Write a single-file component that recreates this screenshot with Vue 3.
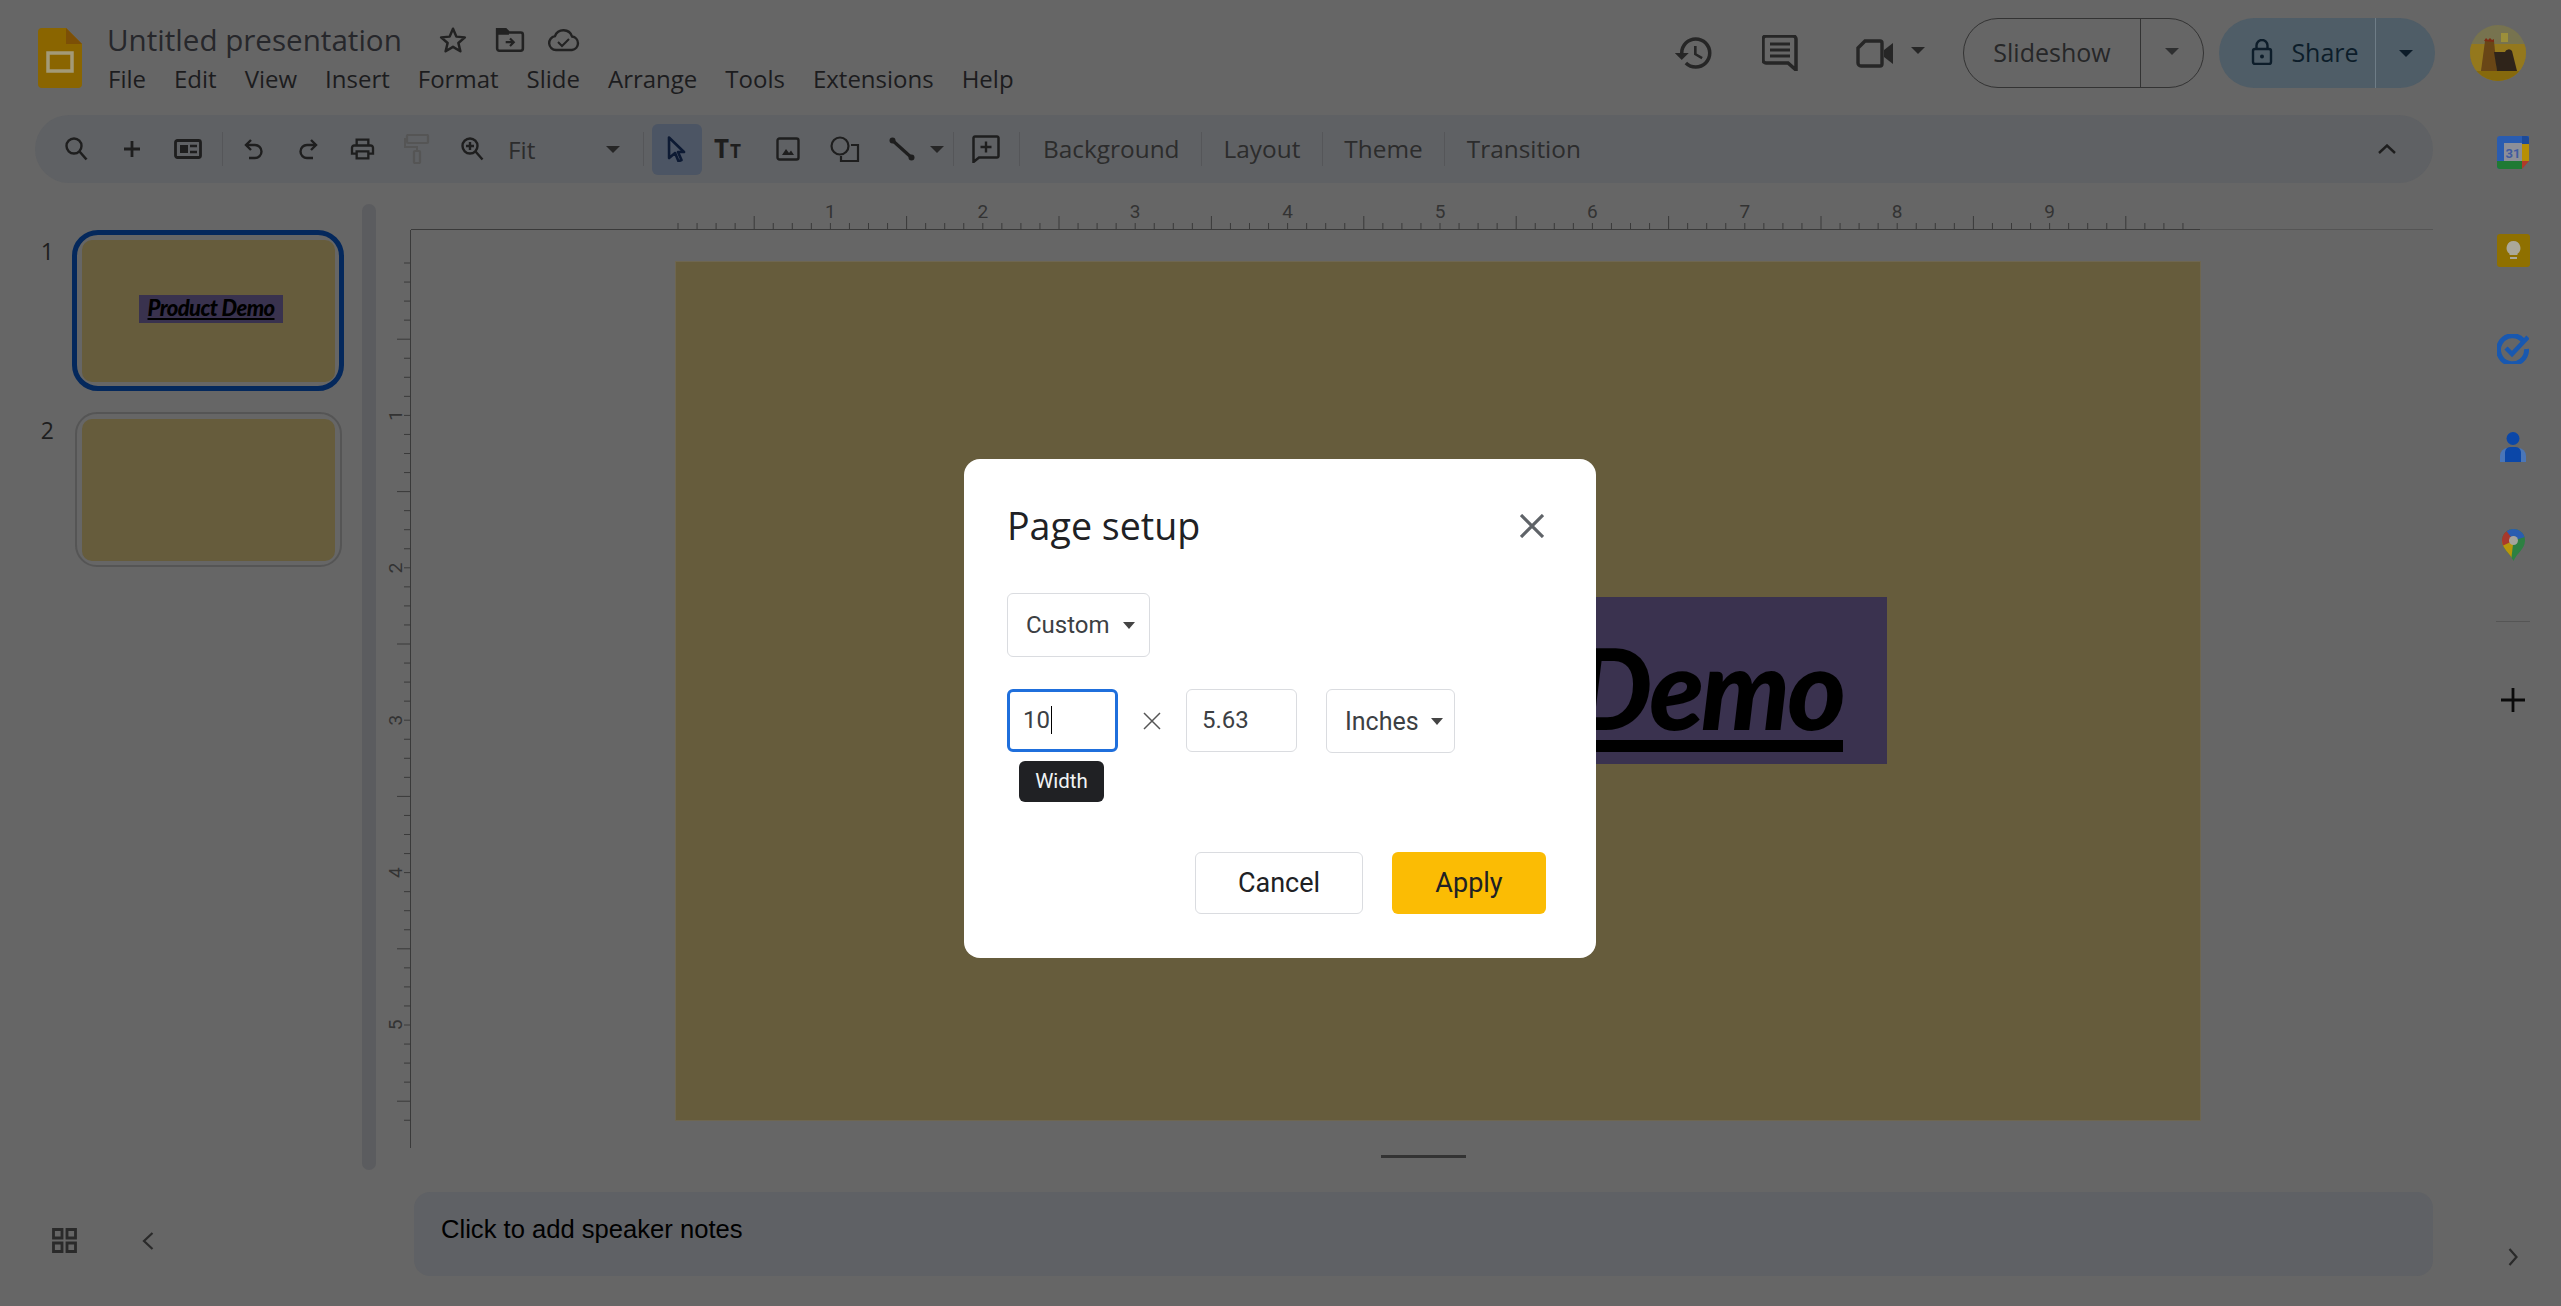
<script setup>
import { computed } from 'vue'

const menus = ['File', 'Edit', 'View', 'Insert', 'Format', 'Slide', 'Arrange', 'Tools', 'Extensions', 'Help']
const textTools = ['Background', 'Layout', 'Theme', 'Transition']

// ruler scale, px per inch at this zoom
const inch = 152.4

const hTicks = computed(() => {
    const out = []
    for (let i = 0; i < 80; i++) {
        out.push({ x: 293 + i * inch / 8, tall: i % 8 === 4 })
    }
    return out
})
const vTicks = computed(() => {
    const out = []
    for (let i = 0; i < 46; i++) {
        out.push({ y: 33 + i * inch / 8, tall: i % 8 === 4 })
    }
    return out
})
const hLabels = [1, 2, 3, 4, 5, 6, 7, 8, 9].map(n => ({ n, x: 293 + n * inch }))
const vLabels = [1, 2, 3, 4, 5].map(n => ({ n, y: 33 + n * inch }))
</script>

<template>
    <div class="page">
        <header class="top">
            <svg class="logo" viewBox="0 0 44 60">
                <path d="M4 0H28L44 16V56a4 4 0 0 1-4 4H4a4 4 0 0 1-4-4V4a4 4 0 0 1 4-4z" fill="#8a6500" />
                <path d="M28 0L44 16H28z" fill="#7c4f06" />
                <rect x="10" y="25" width="24" height="18" fill="none" stroke="#a39a78" stroke-width="3.5" />
            </svg>
            <div class="doc">
                <div class="doc-title">
                    <span class="name">Untitled presentation</span>
                    <svg class="star" viewBox="0 0 24 24"><path d="M12 3l2.7 6.3 6.8.6-5.2 4.5 1.6 6.6-5.9-3.5-5.9 3.5 1.6-6.6-5.2-4.5 6.8-.6z" fill="none" stroke="#222" stroke-width="2" stroke-linejoin="round" /></svg>
                    <svg class="folder" viewBox="0 0 28 24"><path d="M2 2h8l3 3h11a2 2 0 0 1 2 2v13a2 2 0 0 1-2 2H4a2 2 0 0 1-2-2z" fill="none" stroke="#222" stroke-width="2.4" /><path d="M2 2h8l3 3v2H2z" fill="#222" /><path d="M10 14h7M14 10.500l3.500 3.500-3.500 3.500" fill="none" stroke="#222" stroke-width="2" /></svg>
                    <svg class="cloud" viewBox="0 0 33 24"><path d="M9 22a7 7 0 0 1-1-13.900A9 9 0 0 1 25 8.500 6.800 6.800 0 0 1 25 22z" fill="none" stroke="#222" stroke-width="2.400" /><path d="M11 14l4 4 7-7" fill="none" stroke="#222" stroke-width="2" /></svg>
                </div>
                <nav class="menu">
                    <span v-for="m in menus" :key="m">{{ m }}</span>
                </nav>
            </div>
            <div class="actions">
                <svg class="act-history" viewBox="0 0 24 24"><path d="M13 3a9 9 0 0 0-9 9H1l3.890 3.890.07.140L9 12H6c0-3.870 3.130-7 7-7s7 3.130 7 7-3.130 7-7 7c-1.930 0-3.680-.790-4.940-2.060l-1.420 1.420A8.954 8.954 0 0 0 13 21a9 9 0 0 0 0-18zm-1 5v5l4.280 2.540.720-1.210-3.500-2.080V8H12z" fill="#262626" /></svg>
                <svg class="act-comment" viewBox="0 0 36 36"><path d="M4 1h27a3 3 0 0 1 3 3v31l-8-7H4a3 3 0 0 1-3-3V4a3 3 0 0 1 3-3z" fill="none" stroke="#262626" stroke-width="3.500" /><path d="M8 9h20M8 15h20M8 21h20" stroke="#262626" stroke-width="3" /></svg>
                <svg class="act-camera" viewBox="0 0 37 29"><path d="M9 2h15a2 2 0 0 1 2 2v21a2 2 0 0 1-2 2H5a3 3 0 0 1-3-3V9z" fill="none" stroke="#262626" stroke-width="3.400" /><path d="M28 11l9-7v21l-9-7z" fill="#262626" /></svg>
                <i class="caret cam-caret"></i>
                <div class="pill slideshow">
                    <span class="pill-main">Slideshow</span>
                    <span class="pill-more"><i class="caret"></i></span>
                </div>
                <div class="pill share">
                    <span class="pill-main">
                        <svg class="lock" viewBox="0 0 22 26"><path d="M5.500 10V6.500a5.500 5.500 0 0 1 11 0V10" fill="none" stroke="#0d1d2a" stroke-width="2.400" /><rect x="2" y="10" width="18" height="15" rx="2" fill="none" stroke="#0d1d2a" stroke-width="2.400" /><circle cx="11" cy="17.500" r="2" fill="#0d1d2a" /></svg>
                        Share
                    </span>
                    <span class="pill-more"><i class="caret share-caret"></i></span>
                </div>
                <svg class="avatar" viewBox="0 0 56 56">
                    <clipPath id="av"><circle cx="28" cy="28" r="28" /></clipPath>
                    <g clip-path="url(#av)">
                        <rect width="56" height="56" fill="#77734f" />
                        <rect y="19" width="56" height="37" fill="#94781d" />
                        <rect y="46" width="56" height="10" fill="#86690c" />
                        <rect x="31" y="8" width="7" height="9" fill="#9c8f3a" />
                        <path d="M15 16h9l3 30H11z" fill="#694616" />
                        <path d="M14 16l2-3 2 2 2-2 2 2 2-1v3z" fill="#7c2c14" />
                        <path d="M24 27h11a4 4 0 0 1 7-1l5 20H27z" fill="#2f241a" />
                    </g>
                </svg>
            </div>
        </header>

        <div class="work">
            <div class="center">
                <div class="toolbar">
                    <div class="group first">
                        <span class="tool"><svg class="ic-24" viewBox="0 0 24 24"><circle cx="10" cy="9" r="7.500" fill="none" stroke="#1e1e1e" stroke-width="2.400" /><path d="M15.500 14.500l7 8" stroke="#1e1e1e" stroke-width="2.600" /></svg></span>
                        <span class="tool"><svg class="ic-20" viewBox="0 0 20 20"><path d="M10 2v16M2 10h16" stroke="#1e1e1e" stroke-width="2.800" /></svg></span>
                        <span class="tool"><svg class="ic-28" viewBox="0 0 28 20"><rect x="1.500" y="1.500" width="25" height="17" rx="2" fill="none" stroke="#1e1e1e" stroke-width="2.800" /><rect x="6" y="6" width="8" height="8" fill="#1e1e1e" /><path d="M16 7h7M16 13h7" stroke="#1e1e1e" stroke-width="2.400" /></svg></span>
                    </div>
                    <i class="sep s-a"></i>
                    <div class="group">
                        <span class="tool tight"><svg class="ic-24" viewBox="0 0 24 20"><path d="M9 1L4 6l5 5" fill="none" stroke="#1e1e1e" stroke-width="2.400" /><path d="M4 6h9a6.500 6.500 0 0 1 0 13H7" fill="none" stroke="#1e1e1e" stroke-width="2.400" /></svg></span>
                        <span class="tool tight"><svg class="ic-24" viewBox="0 0 24 20"><path d="M15 1l5 5-5 5" fill="none" stroke="#1e1e1e" stroke-width="2.400" /><path d="M20 6h-9a6.500 6.500 0 0 0 0 13h6" fill="none" stroke="#1e1e1e" stroke-width="2.400" /></svg></span>
                        <span class="tool tight"><svg class="ic-print" viewBox="0 0 24 24"><path d="M19 8h-1V3H6v5H5c-1.660 0-3 1.340-3 3v6h4v4h12v-4h4v-6c0-1.660-1.340-3-3-3zM8 5h8v3H8V5zm8 12v2H8v-4h8v2zm2-2v-2H6v2H4v-4c0-.550.450-1 1-1h14c.550 0 1 .450 1 1v4h-2z" fill="#1e1e1e" /></svg></span>
                        <span class="tool tight"><svg class="ic-roller" viewBox="0 0 26 30"><rect x="3" y="1" width="21" height="8" rx="1" fill="none" stroke="#555" stroke-width="2.200" /><path d="M3 5H1v8h12v4" fill="none" stroke="#555" stroke-width="2" /><rect x="10" y="17" width="6" height="12" rx="1" fill="none" stroke="#555" stroke-width="2.200" /></svg></span>
                        <span class="tool tight"><svg class="ic-24" viewBox="0 0 24 24"><circle cx="10" cy="9" r="7.500" fill="none" stroke="#1e1e1e" stroke-width="2.400" /><path d="M15.500 14.500l7 8M10 5v8M6 9h8" stroke="#1e1e1e" stroke-width="2.400" fill="none" /></svg></span>
                    </div>
                    <div class="fit"><span>Fit</span><i class="caret"></i></div>
                    <i class="sep s-b"></i>
                    <span class="tool cursor"><svg class="ic-cursor" viewBox="0 0 20 26"><path d="M2 1.500l15 14.500h-6l3.500 8-3 1.300-3.400-8.300-6 5z" fill="none" stroke="#0d1a33" stroke-width="2.600" stroke-linejoin="round" /></svg></span>
                    <span class="tool draw"><svg class="ic-tt" viewBox="0 -10 34 40"><text x="0" y="19" class="tt-big">T</text><text x="16" y="19" class="tt-small">T</text></svg></span>
                    <span class="tool draw"><svg class="ic-24" viewBox="0 0 24 24"><rect x="1.500" y="1.500" width="21" height="21" rx="2" fill="none" stroke="#1e1e1e" stroke-width="2.400" /><path d="M6 18l4-6 3 4 2-2.500 3 4.500z" fill="#1e1e1e" /></svg></span>
                    <span class="tool draw"><svg class="ic-shape" viewBox="0 0 30 26"><circle cx="10" cy="10" r="8.500" fill="none" stroke="#1e1e1e" stroke-width="2.200" /><path d="M21 9h7v16H11v-5" fill="none" stroke="#1e1e1e" stroke-width="2.200" /></svg></span>
                    <span class="tool draw"><svg class="ic-line" viewBox="0 0 26 24"><path d="M3 3l20 18" stroke="#1e1e1e" stroke-width="3.200" /><circle cx="3.500" cy="3.500" r="3" fill="#1e1e1e" /><circle cx="22.500" cy="20.500" r="3" fill="#1e1e1e" /></svg></span>
                    <i class="caret line-caret"></i>
                    <i class="sep s-c"></i>
                    <span class="tool note"><svg class="ic-note" viewBox="0 0 28 28"><path d="M3 1.500h22a1.500 1.500 0 0 1 1.500 1.500v18a1.500 1.500 0 0 1-1.500 1.500H7L1.500 27V3A1.500 1.500 0 0 1 3 1.500z" fill="none" stroke="#1e1e1e" stroke-width="2.500" /><path d="M14 6.500v11M8.500 12h11" stroke="#1e1e1e" stroke-width="2.400" /></svg></span>
                    <i class="sep s-d"></i>
                    <template v-for="(t, i) in textTools" :key="t">
                        <span class="text-tool">{{ t }}</span>
                        <i v-if="i < textTools.length - 1" class="sep s-text"></i>
                    </template>
                    <svg class="collapse" viewBox="0 0 18 10"><path d="M1 9l8-7.500L17 9" fill="none" stroke="#1e1e1e" stroke-width="2.400" /></svg>
                </div>

                <div class="stage">
                    <aside class="rail">
                        <div class="rail-top">
                            <div class="film">
                                <div class="film-row">
                                    <span class="num">1</span>
                                    <div class="ring active">
                                        <div class="thumb"><span class="thumb-box">Product Demo</span></div>
                                    </div>
                                </div>
                                <div class="film-row">
                                    <span class="num">2</span>
                                    <div class="ring">
                                        <div class="thumb"></div>
                                    </div>
                                </div>
                            </div>
                            <div class="scrollbar"></div>
                        </div>
                        <div class="rail-bottom">
                            <svg class="grid-ic" viewBox="0 0 25 25"><path d="M1.500 1.500h8.500v8.500H1.500zM15 1.500h8.500v8.500H15zM1.500 15h8.500v8.500H1.500zM15 15h8.500v8.500H15z" fill="none" stroke="#2a2a2a" stroke-width="2.800" /></svg>
                            <svg class="chev-left" viewBox="0 0 12 18"><path d="M10.500 1L2 9l8.500 8" fill="none" stroke="#2a2a2a" stroke-width="2.200" /></svg>
                        </div>
                    </aside>

                    <main class="canvas">
                        <svg class="h-ruler" width="2048" height="47" viewBox="0 0 2048 47">
                            <line x1="26" y1="46.500" x2="1815" y2="46.500" class="tick" />
                            <line x1="1815" y1="46.500" x2="2048" y2="46.500" class="tick-light" />
                            <line v-for="t in hTicks" :key="t.x" :x1="t.x" :x2="t.x" :y1="t.tall ? 33 : 40" y2="47" class="tick" />
                            <text v-for="l in hLabels" :key="l.n" :x="l.x" y="35" class="rule-num">{{ l.n }}</text>
                        </svg>
                        <div class="editor">
                            <svg class="v-ruler" width="26" height="918" viewBox="0 0 26 918">
                                <line x1="25.500" y1="0" x2="25.500" y2="918" class="tick" />
                                <line v-for="t in vTicks" :key="t.y" :y1="t.y" :y2="t.y" :x1="t.tall ? 12 : 19" x2="26" class="tick" />
                                <text v-for="l in vLabels" :key="l.n" x="0" y="0" class="rule-num" :transform="`translate(17 ${l.y}) rotate(-90)`">{{ l.n }}</text>
                            </svg>
                            <div class="slide-wrap">
                                <div class="slide">
                                    <div class="slide-box">Product Demo</div>
                                </div>
                                <div class="handle"></div>
                            </div>
                        </div>
                        <div class="notes">Click to add speaker notes</div>
                    </main>
                </div>
            </div>

            <aside class="side">
                <span class="side-slot">
                    <svg class="side-cal" viewBox="0 0 32 33">
                        <path d="M3 0H25L32 0V25H25V33H3a3 3 0 0 1-3-3V3a3 3 0 0 1 3-3z" fill="#2a5cb0" />
                        <path d="M25 0h4a3 3 0 0 1 3 3v5h-7z" fill="#1c4a99" />
                        <rect x="25" y="8" width="7" height="17" fill="#b78f06" />
                        <path d="M0 25h25v8H3a3 3 0 0 1-3-3z" fill="#1f7a34" />
                        <path d="M25 25h7l-7 8z" fill="#b03a2a" />
                        <rect x="7" y="7" width="18" height="18" fill="#8d8f98" />
                        <text x="16" y="22" class="cal-num">31</text>
                    </svg>
                </span>
                <span class="side-slot">
                    <svg class="side-keep" viewBox="0 0 33 33">
                        <rect width="33" height="33" rx="3" fill="#8f7000" />
                        <path d="M16.500 7a7 7 0 0 1 4 12.700V21h-8v-1.300A7 7 0 0 1 16.500 7z" fill="#aba89a" />
                        <rect x="13" y="23" width="7" height="2" fill="#aba89a" />
                    </svg>
                </span>
                <span class="side-slot">
                    <svg class="side-tasks" viewBox="0 0 32 30">
                        <path d="M26 6.500A14 14 0 1 0 29.500 15" fill="none" stroke="#1858b0" stroke-width="5" />
                        <path d="M9 14l6 6L31 3" fill="none" stroke="#1858b0" stroke-width="4.500" />
                    </svg>
                </span>
                <span class="side-slot">
                    <svg class="side-contacts" viewBox="0 0 26 30">
                        <path d="M0 30v-6a8 8 0 0 1 8-8h10a8 8 0 0 1 8 8v6z" fill="#4a76b8" />
                        <path d="M5 30V20a6 6 0 0 1 6-5h4a6 6 0 0 1 6 5v10z" fill="#0b47a8" />
                        <circle cx="13" cy="6.500" r="6.500" fill="#0b47a8" />
                    </svg>
                </span>
                <span class="side-slot">
                    <svg class="side-maps" viewBox="0 0 23 32">
                        <clipPath id="pin"><path d="M11.500 0A11.500 11.500 0 0 1 23 11.500C23 20 15 24 11.500 32 8 24 0 20 0 11.500A11.500 11.500 0 0 1 11.500 0z" /></clipPath>
                        <g clip-path="url(#pin)">
                            <rect width="23" height="32" fill="#2d8042" />
                            <path d="M0 12L11.500 11.500 9 32 0 24z" fill="#b8960b" />
                            <path d="M0 0h7L12 11.500 0 17z" fill="#a8382c" />
                            <path d="M3 0h20v8L11.500 11.500z" fill="#2a5cb0" />
                        </g>
                        <circle cx="11.500" cy="11.500" r="4.500" fill="#a5a49c" />
                    </svg>
                </span>
                <i class="side-sep"></i>
                <svg class="side-plus" viewBox="0 0 24 24"><path d="M12 0v24M0 12h24" stroke="#0a0a0a" stroke-width="2.800" /></svg>
                <svg class="side-chev" viewBox="0 0 10 18"><path d="M1.500 1L8.500 9l-7 8" fill="none" stroke="#2a2a2a" stroke-width="2.200" /></svg>
            </aside>
        </div>

        <div class="dialog">
            <div class="dlg-head">
                <h2>Page setup</h2>
                <svg class="dlg-close" viewBox="0 0 24 24"><path d="M1 1l22 22M23 1L1 23" stroke="#5f6368" stroke-width="3.200" /></svg>
            </div>
            <div class="select custom">Custom<i class="caret dlg-caret"></i></div>
            <div class="size-row">
                <div class="field focused">10<i class="text-caret"></i>
                    <span class="tip">Width</span>
                </div>
                <svg class="times" viewBox="0 0 18 18"><path d="M1 1l16 16M17 1L1 17" stroke="#555" stroke-width="1.500" /></svg>
                <div class="field">5.63</div>
                <div class="select inches">Inches<i class="caret dlg-caret"></i></div>
            </div>
            <div class="dlg-foot">
                <button class="btn cancel">Cancel</button>
                <button class="btn apply">Apply</button>
            </div>
        </div>
    </div>
</template>

<style scoped>
.page {
    position: relative;
    width: 2561px;
    height: 1306px;
    overflow: hidden;
    background: #666;
    font-family: "Open Sans", Roboto, sans-serif;
    color: #1c1c1e;
}

.caret {
    display: block;
    width: 0;
    height: 0;
    border-left: 7px solid transparent;
    border-right: 7px solid transparent;
    border-top: 7px solid #262626;
}

/* top bar */
.top {
    height: 115px;
    box-sizing: border-box;
    display: flex;
    padding: 0 35px 9px 38px;
    align-items: center;
}
.logo {
    width: 44px;
    height: 60px;
    margin-top: 10px;
}
.doc {
    margin-left: 25px;
    margin-top: 8px;
}
.doc-title {
    display: flex;
    align-items: center;
    height: 40px;
}
.name {
    font-size: 29.6px;
    width: 331px;
    color: #26272b;
    white-space: nowrap;
}
.star { width: 30px; height: 30px; margin-top: 2px; }
.folder { width: 30px; height: 26px; margin-left: 27px; margin-top: 2px; }
.cloud { width: 33px; height: 24px; margin-left: 22px; margin-top: 2px; }
.menu {
    display: flex;
    gap: 28px;
    margin-top: 4px;
    margin-left: 1px;
    font-size: 24px;
    line-height: 32px;
}
.actions {
    margin-left: auto;
    display: flex;
    align-items: center;
}
.act-history { width: 42px; height: 42px; }
.act-comment { width: 36px; height: 36px; margin-left: 47px; }
.act-camera { width: 37px; height: 29px; margin-left: 58px; }
.cam-caret { margin-left: 18px; margin-top: -6px; }
.pill {
    display: flex;
    height: 70px;
    box-sizing: border-box;
    border-radius: 35px;
    font-size: 25px;
    line-height: 30px;
    align-items: stretch;
}
.pill-main {
    display: flex;
    align-items: center;
    justify-content: center;
    padding-bottom: 2px;
    box-sizing: border-box;
}
.pill-more {
    display: flex;
    align-items: center;
    justify-content: center;
}
.slideshow {
    margin-left: 38px;
    width: 241px;
    border: 1.5px solid #333;
    color: #262728;
    font-family: "Open Sans", sans-serif;
}
.slideshow .pill-main {
    width: 177px;
    border-right: 1.5px solid #333;
}
.slideshow .pill-more { flex: 1; }
.slideshow .caret { border-top-color: #2e2f30; margin-top: -4px; }
.share {
    margin-left: 15px;
    width: 216px;
    background: #4f5d67;
    color: #0d1d2a;
}
.share .pill-main {
    width: 157px;
    border-right: 1px solid #6f7d87;
    gap: 18px;
    padding-left: 16px;
}
.share .pill-more { flex: 1; }
.share-caret { border-top-color: #0d1d2a; }
.lock { width: 22px; height: 26px; }
.avatar { width: 56px; height: 56px; margin-left: 35px; }

/* layout below the top bar */
.work {
    display: flex;
    height: 1191px;
}
.center {
    width: 2433px;
    display: flex;
    flex-direction: column;
}

/* toolbar */
.toolbar {
    margin-left: 35px;
    height: 68px;
    background: #5f6164;
    border-radius: 34px;
    display: flex;
    align-items: center;
    font-size: 24.4px;
}
.group {
    display: flex;
    align-items: center;
}
.group.first {
    margin-left: 12.5px;
}
.tool {
    display: flex;
    align-items: center;
    justify-content: center;
    width: 56px;
    height: 50px;
}
.tool.tight { width: 54.5px; }
.tool.cursor {
    width: 50px;
    height: 51px;
    background: #4c5564;
    border-radius: 6px;
}
.tool.draw { width: 57px; }
.tool.note { width: 54px; }
.ic-24 { width: 24px; height: 24px; }
.ic-20 { width: 20px; height: 20px; }
.ic-28 { width: 28px; height: 24px; }
.ic-print { width: 33px; height: 28px; }
.ic-roller { width: 26px; height: 30px; }
.ic-cursor { width: 20px; height: 26px; }
.ic-tt { width: 34px; height: 40px; }
.ic-shape { width: 30px; height: 26px; }
.ic-line { width: 26px; height: 24px; }
.ic-note { width: 28px; height: 28px; }
.tt-big {
    font: 700 26px "Open Sans", sans-serif;
    fill: #1e1e1e;
}
.tt-small {
    font: 700 19px "Open Sans", sans-serif;
    fill: #1e1e1e;
}
.sep {
    display: block;
    width: 1px;
    height: 34px;
    background: #555659;
}
.s-a { margin-left: 6px; margin-right: 4px; }
.fit {
    width: 134px;
    box-sizing: border-box;
    padding-left: 9px;
    padding-right: 13px;
    display: flex;
    align-items: center;
    justify-content: space-between;
    color: #2c2c2c;
}
.s-b { margin-left: 10px; margin-right: 8px; }
.line-caret { margin-left: 0; }
.s-c { margin-left: 9px; margin-right: 5px; }
.s-d { margin-left: 6px; margin-right: 23px; }
.text-tool {
    color: #2c2c2c;
    white-space: nowrap;
    padding-bottom: 2px;
}
.s-text { margin: 0 21.5px; }
.collapse {
    width: 18px;
    height: 10px;
    margin-left: auto;
    margin-right: 37px;
}

/* filmstrip */
.stage {
    flex: 1;
    display: flex;
}
.rail {
    width: 385px;
    display: flex;
    flex-direction: column;
}
.rail-top {
    display: flex;
}
.film {
    width: 362px;
    padding-top: 47px;
    display: flex;
    flex-direction: column;
    gap: 21px;
}
.film-row {
    display: flex;
}
.num {
    width: 54px;
    text-align: right;
    font-size: 23px;
    line-height: 30px;
    padding-top: 6px;
    color: #1e1e1e;
}
.film-row + .film-row .num {
    padding-top: 3px;
}
.ring {
    width: 267px;
    height: 155px;
    margin-left: 21px;
    box-sizing: border-box;
    border: 2px solid #555;
    border-radius: 22px;
    display: flex;
    align-items: center;
    justify-content: center;
}
.ring.active {
    width: 272px;
    height: 161px;
    margin-left: 18px;
    border: 5px solid #04285c;
    border-radius: 26px;
}
.thumb {
    width: 253px;
    height: 142px;
    flex-shrink: 0;
    background: #665c3c;
    border-radius: 10px;
    display: flex;
    align-items: center;
    justify-content: center;
}
.thumb-box {
    background: #39324e;
    width: 144px;
    height: 28px;
    margin-left: 5px;
    margin-top: -4px;
    box-sizing: border-box;
    padding-right: 8px;
    color: #000;
    font: italic 900 22px/25px Lato, sans-serif;
    letter-spacing: -0.6px;
    text-align: right;
    text-decoration: underline;
    white-space: nowrap;
}
.scrollbar {
    width: 14px;
    height: 966px;
    margin-top: 21px;
    background: #5b5c5f;
    border-radius: 7px;
}
.rail-bottom {
    margin-top: auto;
    padding: 0 0 53px 52px;
    display: flex;
    align-items: center;
}
.grid-ic { width: 25px; height: 25px; }
.chev-left { width: 12px; height: 18px; margin-left: 65px; }

/* rulers and slide */
.canvas {
    flex: 1;
    display: flex;
    flex-direction: column;
}
.h-ruler, .v-ruler {
    display: block;
    flex-shrink: 0;
}
.tick {
    stroke: #3a3a3a;
    stroke-width: 1;
}
.tick-light {
    stroke: #555;
    stroke-width: 1;
}
.rule-num {
    font: 19px Roboto, sans-serif;
    fill: #333;
    text-anchor: middle;
}
.editor {
    display: flex;
    align-items: flex-start;
    height: 962px;
}
.slide-wrap {
    margin-left: 264px;
    padding-top: 31px;
}
.slide {
    position: relative;
    width: 1526px;
    height: 860px;
    box-sizing: border-box;
    background: #665c3c;
    border: 1px solid #6e6650;
}
/* objects sit freely on the slide */
.slide-box {
    position: absolute;
    left: 343px;
    top: 335px;
    width: 868px;
    height: 167px;
    box-sizing: border-box;
    padding-right: 44px;
    background: #3a324f;
    color: #000;
    font: italic 900 112px/180px Lato, sans-serif;
    letter-spacing: -3px;
    text-align: right;
    white-space: nowrap;
    text-decoration: underline;
    text-decoration-thickness: 12px;
    text-underline-offset: 10px;
    text-decoration-skip-ink: none;
}
.handle {
    width: 85px;
    height: 3px;
    margin-top: 34px;
    margin-left: 706px;
    background: #333;
}
.notes {
    margin-left: 29px;
    height: 84px;
    box-sizing: border-box;
    padding: 0 0 10px 27px;
    display: flex;
    align-items: center;
    background: #5f6165;
    border-radius: 16px;
    font: 25.6px "Liberation Sans", Arial, sans-serif;
    color: #000;
}

/* right add-on strip */
.side {
    width: 128px;
    box-sizing: border-box;
    padding: 17.500px 0 40px 32px;
    display: flex;
    flex-direction: column;
    align-items: center;
}
.side-slot {
    display: flex;
    align-items: center;
    justify-content: center;
    height: 40px;
    margin-bottom: 58px;
}
.side-cal { width: 32px; height: 33px; }
.side-keep { width: 33px; height: 33px; }
.side-tasks { width: 32px; height: 30px; }
.side-contacts { width: 26px; height: 30px; }
.side-maps { width: 23px; height: 32px; }
.cal-num {
    font: 700 13px Roboto, sans-serif;
    fill: #3f5ba0;
    text-anchor: middle;
}
.side-sep {
    display: block;
    width: 34px;
    height: 1px;
    background: #555;
    margin-top: -2px;
}
.side-plus {
    width: 24px;
    height: 24px;
    margin-top: 66px;
}
.side-chev {
    width: 10px;
    height: 18px;
    margin-top: auto;
}

/* page setup dialog, above the dimmed page */
.dialog {
    position: absolute;
    left: 964px;
    top: 459px;
    width: 632px;
    height: 499px;
    box-sizing: border-box;
    padding: 44px 50px 44px 43px;
    background: #fff;
    border-radius: 16px;
    display: flex;
    flex-direction: column;
    color: #202124;
    font-family: Roboto, sans-serif;
}
.dlg-head {
    display: flex;
    align-items: center;
    justify-content: space-between;
    height: 44px;
    margin-bottom: 46px;
}
.dlg-head h2 {
    margin: 0;
    font: 400 37.6px "Open Sans", sans-serif;
    color: #202124;
}
.dlg-close {
    width: 24px;
    height: 24px;
    margin-right: 2px;
    margin-top: 1px;
}
.select {
    display: flex;
    align-items: center;
    box-sizing: border-box;
    border: 1px solid #dadce0;
    border-radius: 6px;
    font-size: 24px;
    color: #3c4043;
}
.custom {
    width: 143px;
    height: 64px;
    padding-left: 18px;
    gap: 13px;
}
.dlg-caret {
    border-left-width: 6.500px;
    border-right-width: 6.500px;
    border-top-color: #444;
}
.size-row {
    display: flex;
    align-items: flex-start;
    margin-top: 32px;
}
.field {
    position: relative;
    width: 111px;
    height: 63px;
    box-sizing: border-box;
    border: 1px solid #dadce0;
    border-radius: 6px;
    padding-left: 15px;
    font-size: 24px;
    line-height: 61px;
    color: #3c4043;
}
.field.focused {
    border: 3px solid #1f6fdc;
    padding-left: 13px;
    line-height: 56px;
}
.text-caret {
    display: inline-block;
    width: 1px;
    height: 28px;
    background: #000;
    vertical-align: -6px;
    margin-left: 1px;
}
/* tooltip hanging under the focused field */
.tip {
    position: absolute;
    left: 9px;
    top: 69px;
    width: 85px;
    height: 41px;
    border-radius: 6px;
    background: #202124;
    color: #f1f3f4;
    font-size: 20.500px;
    line-height: 41px;
    text-align: center;
}
.times {
    width: 18px;
    height: 18px;
    margin: 23px 25px 0;
}
.inches {
    width: 129px;
    height: 64px;
    margin-left: 29px;
    padding-left: 18px;
    gap: 12px;
    font-size: 25px;
}
.dlg-foot {
    margin-top: auto;
    display: flex;
    justify-content: flex-end;
    gap: 29px;
}
.btn {
    height: 62px;
    box-sizing: border-box;
    border-radius: 6px;
    font: 400 27px Roboto, sans-serif;
    color: #202124;
}
.cancel {
    width: 168px;
    background: #fff;
    border: 1px solid #dadce0;
}
.apply {
    width: 154px;
    background: #fbbc04;
    border: none;
}
</style>
